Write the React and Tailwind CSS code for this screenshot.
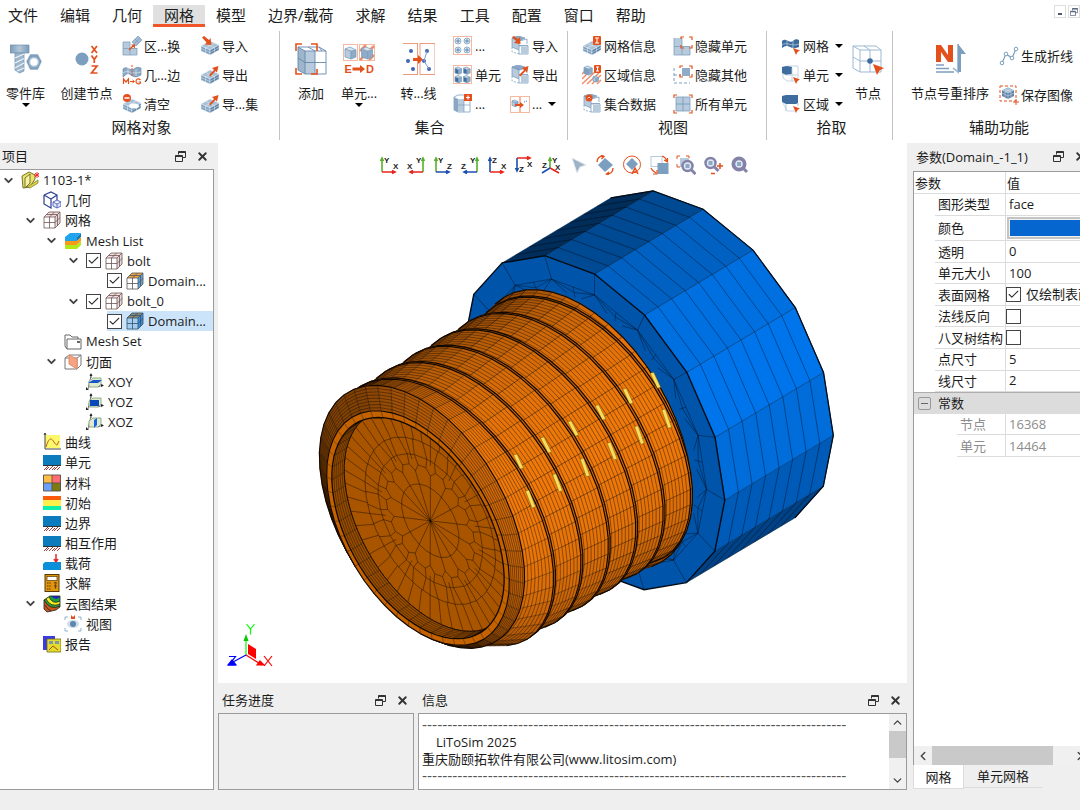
import { useState } from 'react';
import { Check, ChevronDown, ChevronLeft, ChevronRight, ChevronUp, X } from 'lucide-react';
import clsx from 'clsx';

const RED = '#e4501c';
const STEEL = '#7d9fbf';
const PALE = '#b8cbdc';
const DEEP = '#3f6c9f';

/* ---------- bolt model ---------- */

const RAD = Math.PI / 180;
const PITCH = 27.4;

// a point on a ring: cx is the ring centre along the bolt axis, r is relative to the head
const pt = (cx, r, deg) => {
    const c = Math.cos(deg * RAD);
    const s = Math.sin(deg * RAD);
    return [cx + r * (49.7 * c + 120.7 * s), 777.9 - 0.5976 * cx + r * (167 * c + 14.6 * s)];
};
const f = (p) => `${p[0].toFixed(1)} ${p[1].toFixed(1)}`;
const poly = (pts) => `M${pts.map(f).join('L')}Z`;
const mix = (a, b, t) => [a[0] + (b[0] - a[0]) * t, a[1] + (b[1] - a[1]) * t];
const ring = (cx, r, n, start = 0) => poly(Array.from({ length: n }, (_, i) => pt(cx, r, start + (i * 360) / n)));
const shade = (rgb, b) => `rgb(${rgb.map((v) => Math.round(v * b)).join(',')})`;
const light = (deg, low) => low + (1 - low) * Math.max(0, Math.cos((deg - 104) * RAD));

const BLUE = [0, 116, 234];
const ORANGE = [240, 121, 10];

function band(front, back, { n = 48, rows = 1, color, low, gain = 1, edge = true }) {
    const faces = [];
    let grid = '';
    let rim = '';
    for (let i = 0; i < n; i++) {
        const a = -66 + (i * 360) / n;
        const b = -66 + ((i + 1) * 360) / n;
        const A0 = pt(...front(a), a);
        const A1 = pt(...front(b), b);
        const B0 = pt(...back(a), a);
        const B1 = pt(...back(b), b);
        const cross = (A1[0] - A0[0]) * (B0[1] - A0[1]) - (A1[1] - A0[1]) * (B0[0] - A0[0]);
        if (cross <= 0) continue;
        faces.push({ d: poly([A0, A1, B1, B0]), fill: shade(color, gain * light((a + b) / 2, low)) });
        grid += `M${f(A0)}L${f(B0)}`;
        for (let k = 1; k < rows; k++) grid += `M${f(mix(A0, B0, k / rows))}L${f(mix(A1, B1, k / rows))}`;
        rim += `M${f(B0)}L${f(B1)}`;
    }
    return { faces, grid, rim: edge ? rim : '' };
}

const crest = (k, deg) => 446.5 + PITCH * k - (PITCH * (deg - 67)) / 360;
const chamfer = (deg) => 0.784 + 0.06 * Math.cos((deg - 157.6) * RAD);

const headSide = (() => {
    const faces = [];
    let grid = '';
    for (let i = 1; i < 9; i++) {
        const a = i * 22.5;
        const b = a + 22.5;
        faces.push({ d: poly([pt(594.3, 1, a), pt(594.3, 1, b), pt(702.8, 1, b), pt(702.8, 1, a)]), fill: shade(BLUE, light(a + 11, 0.35)) });
        for (let k = 0; k <= 8; k++) grid += `M${f(pt(594.3 + 13.56 * k, 1, a))}L${f(pt(594.3 + 13.56 * k, 1, b))}`;
        grid += `M${f(pt(594.3, 1, a))}L${f(pt(702.8, 1, a))}`;
    }
    return { faces, grid };
})();

const headOutline = `M${[9, 8, 7, 6, 5, 4, 3, 2, 1].map((i) => f(pt(702.8, 1, i * 22.5))).join('L')}`;

const headFaceGrid = (() => {
    let d = ring(594.3, 0.86, 16);
    for (let i = 0; i < 16; i++) {
        const a = i * 22.5;
        d += `M${f(pt(594.3, 1, a))}L${f(pt(594.3, 0.86, a))}L${f(pt(594.3, 0.79, a + 7))}`;
        d += `M${f(pt(594.3, 0.86, a))}L${f(pt(594.3, 0.79, a - 7))}`;
        d += `M${f(pt(594.3, 0.86, a))}L${f(pt(594.3, 0.81, a + 11))}L${f(pt(594.3, 0.86, a + 22.5))}`;
        d += `M${f(mix(pt(594.3, 0.86, a), pt(594.3, 0.86, a + 22.5), 0.5))}L${f(pt(594.3, 0.78, a + 11))}`;
    }
    return d;
})();

const shoulder = band(() => [562, 0.8], () => [583, 0.835], { rows: 6, color: ORANGE, low: 0.62 });

const threads = [5, 4, 3, 2, 1, 0].flatMap((k) => [
    band((a) => [crest(k, a), 0.82], (a) => [crest(k, a) + 2, 0.82], { color: ORANGE, low: 0.62, gain: 0.85 }),
    band(
        (a) => (k ? [crest(k, a) - 24, 0.795] : [423, chamfer(a) - 0.01]),
        (a) => [crest(k, a), 0.82],
        { rows: 8, color: ORANGE, low: 0.62 },
    ),
]);

const nose = [
    band(() => [418, 0.7], (a) => [422, chamfer(a)], { rows: 8, color: ORANGE, low: 0.62, gain: 0.86 }),
    band(() => [418, 0.66], () => [418, 0.7], { rows: 1, color: [196, 98, 0], low: 1 }),
];
const recess = band(() => [430.3, 0.66], () => [418, 0.66], { rows: 6, color: [150, 76, 0], low: 1, edge: false });

const endFaceGrid = (() => {
    const c = 430.3;
    let d = ring(c, 0.22, 24) + ring(c, 0.5, 32);
    for (let i = 0; i < 48; i++) {
        const a = i * 7.5;
        d += `M${f(pt(c, i % 3 ? 0.5 : 0.37, a))}L${f(pt(c, 0.66, a))}`;
    }
    for (let i = 0; i < 16; i++) {
        const a = i * 22.5;
        const at = (r, o) => f(pt(c, r, a + o));
        d += `M${f(pt(c, 0, 0))}L${at(0.3, 0)}`;
        d += `M${at(0.3, 0)}L${at(0.34, 6)}L${at(0.34, 16)}L${at(0.3, 22.5)}`;
        d += `M${at(0.34, 6)}L${at(0.4, 4)}L${at(0.4, 18)}L${at(0.34, 16)}M${at(0.4, 4)}L${at(0.4, -4)}`;
        d += `M${at(0.4, 4)}L${at(0.5, 7)}M${at(0.4, 18)}L${at(0.5, 16)}`;
    }
    return d;
})();

const glints = [
    [650.7, 373.3, 659.3, 388.3], [623.3, 389.3, 631.7, 404], [595.7, 405.7, 604.3, 420],
    [568.3, 421.7, 577.3, 436], [662.3, 410, 670, 428.3], [635, 426.7, 642.7, 444.3],
    [607.7, 443.3, 615.7, 460], [580.7, 459.3, 588.3, 476.7], [541, 438, 550, 453],
    [553, 474.7, 561, 491.7], [514, 455, 522, 469], [526, 491, 534, 508],
];

const Surface = ({ part, w = 1.2 }) => (
    <>
        {part.faces.map((q, i) => <path key={i} d={q.d} fill={q.fill} stroke={q.fill} strokeWidth="0.5" />)}
        <path d={part.grid} stroke="#000" strokeOpacity="0.62" strokeWidth="0.6" fill="none" />
        {part.rim && <path d={part.rim} stroke="#120800" strokeWidth={w} fill="none" />}
    </>
);

function BoltScene() {
    return (
        <svg viewBox="218 186 689 497" className="block h-full w-full" role="img" aria-label="bolt mesh">
            <defs>
                <clipPath id="opening"><path d={ring(418, 0.66, 72)} /></clipPath>
            </defs>
            <Surface part={headSide} />
            <path d={headOutline} stroke="#000c18" strokeWidth="1.3" fill="none" />
            <path d={ring(594.3, 1, 16)} fill="#0055aa" stroke="#000c18" strokeWidth="1.4" />
            <path d={headFaceGrid} stroke="#00101f" strokeOpacity="0.75" strokeWidth="0.6" fill="none" />
            <Surface part={shoulder} />
            {threads.map((t, i) => <Surface key={i} part={t} />)}
            {glints.map(([x0, y0, x1, y1], i) => (
                <path key={i} d={`M${x0 - 0.5} ${y0}l3.5 -1L${x1 + 1.5} ${y1 - 1}l-3.500 1Z`} fill="#f6dd5c" stroke="#6b4a08" strokeWidth="0.4" />
            ))}
            {nose.map((t, i) => <Surface key={i} part={t} />)}
            <g clipPath="url(#opening)">
                <path d={ring(430.3, 0.66, 72)} fill="#a95500" stroke="#1c0e00" strokeWidth="1" />
                <path d={endFaceGrid} stroke="#000" strokeOpacity="0.7" strokeWidth="0.6" fill="none" />
                <Surface part={recess} />
                <path d={ring(430.3, 0.66, 72)} fill="none" stroke="#1c0e00" strokeWidth="1" />
            </g>
            <path d={ring(418, 0.66, 72)} fill="none" stroke="#120800" strokeWidth="1.3" />
            <g strokeWidth="1.2" fill="none">
                <path d="M246 655V640" stroke="#0f0" />
                <path d="M243.500 641L246 634L248.500 641Z" fill="#0c0" />
                <path d="M246 655L262 665" stroke="red" />
                <path d="M257 665L264 665L260 661Z" fill="red" stroke="red" />
                <path d="M248 644L256 649V659L248 654Z" fill="red" />
                <path d="M246 655L233 662" stroke="#00f" />
                <path d="M228 665L236 665L232 660Z" fill="#00f" stroke="#00f" />
                <path d="M246.500 624L250.500 629L254.500 624M250.500 629V634.500" stroke="#0f0" />
                <path d="M264 656L272 666M272 656L264 666" stroke="red" />
                <path d="M229 656.500H235.500L229 665H235.500" stroke="#00f" />
            </g>
        </svg>
    );
}

/* ---------- ribbon icons ---------- */

const Svg = ({ size = 20, box = size, children }) => (
    <svg width={size} height={size} viewBox={`0 0 ${box} ${box}`} fill="none" className="shrink-0" aria-hidden="true">{children}</svg>
);

const Slab = () => (
    <g stroke="#e6eef5" strokeWidth="0.5">
        <path d="M1 10L10 5L19 9L10 14Z" fill="#a9c1d6" />
        <path d="M1 10L10 14V19L1 15Z" fill={STEEL} />
        <path d="M19 9L10 14V19L19 14Z" fill="#5e82a6" />
        <path d="M5.500 7.500L14.500 11.500V16.500M5.500 12V17M14.500 7L5.500 12M1 12.500L10 16.500L19 11.500" />
    </g>
);
const ArrowIn = () => <path d="M2 1.500L4 0L9 4L10.500 2L11.500 9L5 8.500L6.500 6.500Z" fill={RED} />;
const ArrowOut = () => <path d="M9 10L14 5L12 3L18.500 1L17 7.500L15.500 6L10.500 11.500Z" fill={RED} />;

const MiniCube = ({ x = 0, y = 0, s = 1, fill = PALE }) => (
    <g transform={`translate(${x} ${y}) scale(${s})`} stroke={STEEL} strokeWidth={0.8 / s} strokeLinejoin="round">
        <path d="M0 2L6 4V12L0 10Z" fill={fill} />
        <path d="M6 4L11 3V10L6 12Z" fill="#8fabc5" />
        <path d="M0 2L5 0L11 3L6 4Z" fill="#d9e4ed" />
    </g>
);

const HalfCube = () => (
    <g strokeWidth="0.8" stroke={STEEL}>
        <path d="M2 2L9 5V14L2 11Z" fill={PALE} />
        <path d="M2 2L8 0L15 2L9 5Z" fill={DEEP} fillOpacity="0.6" />
        <path d="M9 5L17 3V8M9 9.500H18M9 14V18H18V10H9" fill="none" />
        <path d="M11 11H18V18H11Z" fill={PALE} stroke="none" />
        <path d="M2 11V16L9 18" strokeDasharray="2 1.500" />
    </g>
);

const Cursor = ({ x = 12, y = 12 }) => <path d={`M${x} ${y}L${x + 7} ${y + 2.5}L${x + 4.5} ${y + 4}L${x + 3} ${y + 7}Z`} fill={RED} />;

const small = {
    swap: <><path d="M1 6H8V12H15V19H1Z" fill={PALE} /><path d="M1 12.500H15M8 6V19M1 6H8M1 6V19H15V12" stroke={STEEL} strokeWidth="0.8" /><path d="M10 6L16 0L20 4L14 10Z" fill="#a4bbcf" stroke={STEEL} strokeWidth="0.7" /><path d="M12 8L18 2M13 3L17 7" stroke={STEEL} strokeWidth="0.6" /><path d="M7 14L12 9" stroke={RED} strokeWidth="1.400" /><path d="M9 8.500H13V12.500Z" fill={RED} /></>,
    edge: <><path d="M1 4C5 0 8 7 12 4S17 3 19 3V10C15 12 13 13 9 10S4 10 1 12Z" fill="#8ba9c5" stroke="#5e82a6" strokeWidth="0.6" /><path d="M6 3V10M14 4V11M1 8C6 4 9 10 19 7" stroke="#dce7f0" strokeWidth="0.7" /><path d="M10 0V12" stroke={RED} strokeDasharray="2 1" /><path d="M1.500 19V14L4 17L6.500 14V19M18.500 15C16 12.500 14 14.500 14 16.500S17 20 18.500 18V17H16.500" stroke={RED} strokeWidth="1.200" /><path d="M8 16.500H12M10.500 15L12.500 16.500L10.500 18" stroke={RED} /></>,
    clear: <><Slab /><ellipse cx="12" cy="12" rx="5" ry="2.500" fill="#fff" /><circle cx="5" cy="4" r="4" fill={RED} /><path d="M2.500 4H7.500" stroke="#fff" strokeWidth="1.500" /></>,
    in: <><Slab /><ArrowIn /></>,
    out: <><Slab /><ArrowOut /></>,
    dots: <><rect x="0.500" y="0.500" width="18" height="18" stroke="#f5b9a2" />{[5, 14].flatMap((x) => [5, 14].map((y) => <g key={`${x}${y}`} stroke={STEEL} strokeWidth="0.8"><circle cx={x} cy={y} r="3" fill="#dbe6ef" /><circle cx={x} cy={y} r="1.300" fill={STEEL} /></g>))}</>,
    cells: <><rect x="0.500" y="0.500" width="18" height="18" stroke="#f5b9a2" />{[2, 10.5].flatMap((x) => [2, 10.5].map((y) => <MiniCube key={`${x}${y}`} x={x} y={y} s={0.6} fill={DEEP} />))}</>,
    addset: <><path d="M1 3L5 1H12V4H17V18H5L1 16Z" fill="#fff" stroke={STEEL} strokeWidth="0.8" /><path d="M1 3L5 5V18L1 16Z" fill="#89a7c2" /><path d="M5 5H11V18H5Z" fill={PALE} /><path d="M5 11H17M11 5V18" stroke={STEEL} strokeWidth="0.7" /><rect x="11" y="0" width="8" height="7" fill={RED} /><path d="M15 1.500V5.500M13 3.500H17" stroke="#fff" strokeWidth="1.200" /></>,
    setin: <><HalfCube /><path d="M2 1L4 0L8 3L10 1L10.500 8L4 7L6 5Z" fill={RED} /></>,
    setout: <><HalfCube /><ArrowOut /></>,
    split: <><rect x="0.500" y="2.500" width="9" height="16" stroke="#f5b9a2" /><rect x="10.500" y="2.500" width="9" height="16" stroke="#f5b9a2" /><MiniCube x={2} y={6} s={0.55} /><path d="M5 10H10V8L14 11L10 14V12H5Z" fill={RED} /><path d="M14 8L17 7" stroke={DEEP} strokeDasharray="1 1" /></>,
    meshinfo: <><Slab /><rect x="11" y="0" width="8" height="9" rx="1" fill={RED} /><path d="M13 2H17M15 2V7M13 7H17" stroke="#fff" /></>,
    zoneinfo: <><path d="M0 9L4 5M0 14L9 5M0 19L14 6M5 19L17 8M10 19L19 10M15 19L19 15" stroke="#ef8d6c" strokeWidth="1.500" /><MiniCube x={2} y={1} s={0.75} fill="#7f9fbe" /><MiniCube x={11} y={11} s={0.5} /><rect x="12" y="0" width="7" height="8" rx="1" fill={RED} /><path d="M14 2H17M15.500 2V6M14 6H17" stroke="#fff" /></>,
    setdata: <><HalfCube /><circle cx="7" cy="4" r="3.500" fill={RED} /><path d="M5.500 4.500L7 3L8.500 4.500" stroke="#fff" strokeWidth="0.700" /></>,
    hide: <><path d="M1 2H9V10H17V19H1Z" fill={PALE} /><path d="M1 10.500H17M9 2V19M1 2V19H17V10" stroke={STEEL} strokeWidth="0.8" /><path d="M8 3V1H11M16 1H19V4M19 9V12H16M11 12H8V9" stroke={RED} strokeWidth="1.200" /></>,
    hideother: <><path d="M1 3V18H17" stroke={STEEL} strokeDasharray="3 2" /><rect x="9" y="3" width="8" height="8" fill="#8fabc5" /><path d="M1 10H8" stroke={STEEL} strokeDasharray="3 2" /><path d="M7 3V1H10M16 1H19V4M19 9V12H16M10 12H7V9" stroke={RED} strokeWidth="1.200" /></>,
    all: <><rect x="3" y="3" width="14" height="14" fill={PALE} stroke={STEEL} strokeWidth="0.8" /><path d="M10 3V17M3 10H17" stroke={STEEL} /><path d="M1 4V1H4M16 1H19V4M19 16V19H16M4 19H1V16" stroke={RED} strokeWidth="1.200" /></>,
    pickmesh: <><path d="M1 5C5 1 8 8 12 5S16 4 18 4V11C15 12 13 13 9 11S4 10 1 12Z" fill={DEEP} /><path d="M6 4V10M12 5V12M1 9C6 5 9 11 18 8" stroke="#b9cfe2" strokeWidth="0.7" /><Cursor /></>,
    pickcell: <><path d="M2 2L7 1H17V14L14 16H6L2 13Z" stroke={PALE} strokeWidth="0.8" /><path d="M1 2L6 1L11 2V9L5 10L1 8Z" fill={DEEP} /><path d="M11 3V16M5 10H17" stroke={PALE} strokeWidth="0.8" /><Cursor /></>,
    pickzone: <><path d="M2 9L6 17H15" stroke={PALE} strokeWidth="0.8" /><path d="M1 2L5 1H17V9L15 10H5L1 8Z" fill={DEEP} /><path d="M5 10V17M17 9V12" stroke={PALE} /><Cursor /></>,
    polyline: <><path d="M3 17L7 8L13 12L17 3" stroke={STEEL} strokeWidth="1.200" />{[[3, 17], [7, 8], [13, 12], [17, 3]].map(([x, y]) => <circle key={x} cx={x} cy={y} r="1.800" fill="#fff" stroke={STEEL} />)}</>,
    snapshot: <><rect x="1" y="1" width="16" height="15" stroke={RED} strokeDasharray="3 2" /><path d="M9 2.500L15 5.500V11L9 14L3 11V5.500Z" fill="#5e82a6" /><path d="M9 2.500L15 5.500L9 8.500L3 5.500Z" fill="#a9c1d6" /><path d="M9 8.500V14M6 4L12 7V12.500M12 4L6 7V12.500M3 8L9 11L15 8" stroke="#dce7f0" strokeWidth="0.5" /><path d="M17 14V20M14 17H20" stroke={RED} /></>,
};

const big = {
    parts: <><path d="M0 2H19V10H0Z" fill="url(#steel)" stroke="#6f91b0" strokeWidth="0.7" /><path d="M5 10H14V28L9.500 30L5 27Z" fill="#9db6cc" stroke="#6f91b0" strokeWidth="0.7" /><path d="M5 15L14 11M5 20L14 15.500M5 25L14 20M7 28L14 25" stroke="#f1f5f9" strokeWidth="1.100" /><path d="M20 11H28L32 18.500L28 27H20L16 18.500Z" fill="#7f9fbd" stroke="#f4f7fa" strokeWidth="0.7" /><circle cx="24" cy="19" r="4.500" fill="#fff" stroke="#aac0d4" strokeWidth="1.500" /></>,
    nodes: <><circle cx="11" cy="16" r="6.500" fill={STEEL} /><path d="M20.500 3L26 10M26 3L20.500 10M20.500 12.500L23.300 16.500L26 12.500M23.300 16.500V20M20.500 23H26L20.500 30H26.500" stroke={RED} strokeWidth="1.700" /></>,
    add: <><path d="M3 4L10 8V31L3 27Z" fill="#9db6cc" /><path d="M10 8H20V31H10Z" fill={PALE} /><path d="M3 4H24L31 8V31H10L3 27ZM3 4L10 8H31M10 8V31M20 8V31M13 4L20 8M3 15L10 19.500H31M24 4L27 8" stroke="#6488ab" strokeWidth="0.9" /><path d="M1 8V1H7M16 1H22V8M22 26V31H16M7 31H1V25" stroke={RED} strokeWidth="1.600" /></>,
    convert: <><rect x="0.500" y="1.500" width="14" height="16" stroke="#f5b9a2" /><rect x="16.500" y="1.500" width="15" height="16" stroke="#f5b9a2" /><path d="M17 8L23 2M17 17L31 3M26 17L31 12" stroke="#ef8d6c" strokeWidth="2.500" /><MiniCube x={2} y={4} /><MiniCube x={18.5} y={4} fill="#8fabc5" /><path d="M9.500 24.500H17V22L22 26L17 30V27.500H9.500Z" fill={RED} /><g fontFamily="Liberation Sans" fontWeight="700" fontSize="11" fill={RED}><text x="1.500" y="29.500">E</text><text x="23" y="29.500">D</text></g></>,
    topoly: <><rect x="-0.500" y="0.500" width="15" height="31" stroke="#f29b7c" /><rect x="17" y="0.500" width="15" height="31" stroke="#f29b7c" /><g fill="#3d67b5"><circle cx="8" cy="8" r="2" /><circle cx="5" cy="18" r="2" /><circle cx="10" cy="26" r="2" /><circle cx="24" cy="8" r="2" /><circle cx="21" cy="18" r="2" /><circle cx="26" cy="26" r="2" /></g><path d="M24 8L21 18L26 26" stroke="#7e9cd0" /><path d="M10 15H15V12L20 16.500L15 21V18H10Z" fill={RED} /></>,
    picknode: <><path d="M1 3L8 7V29L1 25ZM8 7H29V29H8M1 3H24L29 7M8 18H29M18 7V29M1 14L8 18M12 3L18 7" stroke="#9db9d3" strokeWidth="1" /><circle cx="18" cy="18" r="2.800" fill={DEEP} /><path d="M21 21L32 25L27.500 27.500L25 32Z" fill={RED} /></>,
    reorder: <><path d="M2 19V2H7L14 12V2H19V19H14L7 9V19Z" fill={RED} /><path d="M2 22H10M2 25.500H15M2 29H20" stroke={STEEL} strokeWidth="1.500" /><path d="M24 1V29L19 25" stroke="#a9bfd2" strokeWidth="2" /><path d="M24 1L32 11H27V29H24Z" fill={STEEL} /></>,
};

const Caret = ({ className }) => <span className={clsx('block h-0 w-0 border-x-[4px] border-t-[4px] border-x-transparent border-t-black', className)} />;

const Tool = ({ icon, label, menu }) => (
    <button className="flex h-[29px] items-center gap-[2px] whitespace-nowrap">
        <Svg>{small[icon]}</Svg>
        {label}
        {menu && <Caret className="ml-1" />}
    </button>
);

const BigTool = ({ icon, label, menu, className }) => (
    <button className={clsx('flex shrink-0 flex-col items-center whitespace-nowrap pt-3', className)}>
        <Svg size={32}>{big[icon]}</Svg>
        <span className="mt-2 leading-5">{label}</span>
        {menu && <Caret />}
    </button>
);

const Group = ({ title, className, children }) => (
    <section className={clsx('flex shrink-0 flex-col border-r border-[#c4c4c4]', className)}>
        <div className="flex h-[86px] items-start">{children}</div>
        <h2 className="pl-1 text-center text-[15px] leading-5">{title}</h2>
    </section>
);

const MENU = ['文件', '编辑', '几何', '网格', '模型', '边界/载荷', '求解', '结果', '工具', '配置', '窗口', '帮助'];

function Ribbon() {
    return (
        <header className="shrink-0 overflow-hidden bg-white">
            <div className="flex h-7 items-start justify-between pt-[5px]">
                <nav className="-ml-[3px] flex">
                    {MENU.map((m) => (
                        <button key={m} className={clsx('h-[22px] whitespace-nowrap border-b-[3px] px-[11px] text-[15px] leading-5', m === '网格' ? 'border-[#f0562a] bg-[#e0e0e0]' : 'border-transparent')}>{m}</button>
                    ))}
                </nav>
                <div className="flex gap-[2px] text-[#4a5a70]">
                    <button aria-label="最小化" className="h-[13px] w-[12px] border border-[#dedede] pl-[3px] pt-1"><span className="block h-[2px] w-1 bg-[#4a5a70]" /></button>
                    <button aria-label="还原" className="h-[13px] w-[12px] border border-[#dedede] pl-px"><Restore size={8} /></button>
                </div>
            </div>
            <div className="flex h-[115px] pb-[3px] pt-[3px]">
                <Group title="网格对象" className="w-[280px]">
                    <BigTool icon="parts" label="零件库" menu className="w-[51px]" />
                    <BigTool icon="nodes" label="创建节点" className="w-[71px]" />
                    <div className="w-[78px]">
                        <Tool icon="swap" label="区...换" />
                        <Tool icon="edge" label="几...边" />
                        <Tool icon="clear" label="清空" />
                    </div>
                    <div>
                        <Tool icon="in" label="导入" />
                        <Tool icon="out" label="导出" />
                        <Tool icon="out" label="导...集" />
                    </div>
                </Group>
                <Group title="集合" className="w-[288px] pl-2">
                    <BigTool icon="add" label="添加" className="w-[46px]" />
                    <BigTool icon="convert" label="单元..." menu className="w-[50px]" />
                    <BigTool icon="topoly" label="转...线" className="w-[69px]" />
                    <div className="w-[57px]">
                        <Tool icon="dots" label="..." />
                        <Tool icon="cells" label="单元" />
                        <Tool icon="addset" label="..." />
                    </div>
                    <div>
                        <Tool icon="setin" label="导入" />
                        <Tool icon="setout" label="导出" />
                        <Tool icon="split" label="..." menu />
                    </div>
                </Group>
                <Group title="视图" className="w-[199px] pl-2">
                    <div className="ml-[6px] w-[91px]">
                        <Tool icon="meshinfo" label="网格信息" />
                        <Tool icon="zoneinfo" label="区域信息" />
                        <Tool icon="setdata" label="集合数据" />
                    </div>
                    <div>
                        <Tool icon="hide" label="隐藏单元" />
                        <Tool icon="hideother" label="隐藏其他" />
                        <Tool icon="all" label="所有单元" />
                    </div>
                </Group>
                <Group title="拾取" className="w-[126px]">
                    <div className="ml-[14px] w-[66px]">
                        <Tool icon="pickmesh" label="网格" menu />
                        <Tool icon="pickcell" label="单元" menu />
                        <Tool icon="pickzone" label="区域" menu />
                    </div>
                    <BigTool icon="picknode" label="节点" className="w-[42px]" />
                </Group>
                <Group title="辅助功能" className="w-[209px]">
                    <BigTool icon="reorder" label="节点号重排序" className="ml-4 w-[82px]" />
                    <div className="ml-2 flex flex-col gap-[10px] pt-[10px]">
                        <Tool icon="polyline" label="生成折线" />
                        <Tool icon="snapshot" label="保存图像" />
                    </div>
                </Group>
            </div>
        </header>
    );
}

/* ---------- docks ---------- */

function Restore({ size = 11 }) {
    return (
        <svg width={size} height={size} viewBox="0 0 11 11" fill="none" stroke="currentColor" aria-hidden="true">
            <path d="M3.500 3.500V0.500H10.500V6.500H7.500M0.500 4.500H7.500V10.500H0.500Z" />
            <path d="M3.500 1.200H10.500M0.500 5.200H7.500" strokeWidth="1.500" />
        </svg>
    );
}

const DockHeader = ({ title, className }) => (
    <div className={clsx('flex shrink-0 items-center whitespace-nowrap', className)}>
        <h2 className="mr-auto">{title}</h2>
        <button aria-label="浮动" className="mr-[10px] shrink-0 text-[#333]"><Restore /></button>
        <button aria-label="关闭" className="shrink-0 text-[#333]"><X size={13} strokeWidth={3.5} /></button>
    </div>
);

function Tick({ id, label, checked }) {
    const [on, setOn] = useState(checked);
    return (
        <span className="relative block h-[15px] w-[15px] shrink-0">
            <input id={id} type="checkbox" aria-label={label} checked={on} onChange={() => setOn(!on)} className="block h-[15px] w-[15px] appearance-none border border-[#444] bg-white" />
            {on && <Check size={13} strokeWidth={2} className="pointer-events-none absolute left-px top-px text-[#333]" />}
        </span>
    );
}

const gridCube = (side, top, face = '#fff', line = '#6d5555') => (
    <>
        <path d="M1 6H12V17H1Z" fill={face} /><path d="M1 6L6 1H17L12 6Z" fill={top} /><path d="M12 6L17 1V12L12 17Z" fill={side} />
        <path d="M1 6H12V17H1ZM1 6L6 1H17L12 6M17 1V12L12 17M6.500 6V17M1 11.500H12L17 6.500M6.500 6L11.500 1M3.500 3.500H14.500V14.500" stroke={line} strokeWidth="0.8" />
    </>
);
const support = <><path d="M0 2H18V12H0Z" fill="#0a7bbd" /><path d="M0 12.500H18" stroke="#333" /><path d="M1 17L5 13M6 17L10 13M11 17L15 13M3 17L6 14M9 17L12 14M14 17L17 14" stroke="#a03b3b" /></>;
const axes = (mid) => <><path d="M5 3L2 16M5 1V5M12 14L17 12" stroke="#555" strokeWidth="0.8" /><path d="M3 8L7 5H15V11L12 14H3Z" fill="#dfead0" stroke="#7c9a6c" strokeWidth="0.8" />{mid}<path d="M15 11L18 12.500L15 14ZM0 14V17H3M3.500 3L5 0L6.500 3Z" fill="#222" /></>;

const tree = {
    project: <><path d="M1 5L8 1L14 4V8L9 16L2 17Z" fill="#e9e36a" stroke="#77722a" /><path d="M4 7L9 3V12L4 17Z" fill="#f7f3a6" stroke="#77722a" /><path d="M6 16L17 9V12L9 17Z" fill="#d9d04a" stroke="#77722a" strokeWidth="0.7" /><path d="M16 1V7M13 4H19M14 2L18 6M18 2L14 6" stroke="#e22" strokeWidth="0.9" /></>,
    geometry: <><path d="M1 4L8 1L14 4V9M1 4V13L8 17V8L1 4M8 8L14 4" stroke="#2d3f8f" strokeWidth="1.200" /><path d="M10 11L14 9L18 11V15L14 17L10 15ZM10 11L14 13L18 11M14 13V17" stroke="#4e62b8" fill="#dfe4f8" strokeWidth="0.9" /></>,
    mesh: gridCube('#e7d9d9', '#f2dcdc'),
    orange: gridCube('#5ba6e0', '#e8a24a', '#fff', '#555'),
    blue: gridCube('#3f8fd6', '#8a8a70', '#a5cdf0', '#33506a'),
    list: <><path d="M1 5L6 1H17L13 5ZM1 5H13V9H1Z" fill="#22a3ee" /><path d="M13 5L17 1V5L13 9Z" fill="#0a78bd" /><path d="M1 9H13V13H1ZM13 9L17 5V9L13 13Z" fill="#f79a1a" /><path d="M1 13H13V17H1ZM13 13L17 9V13L13 17Z" fill="#b3e81c" /></>,
    folder: <><path d="M1 14V3H6L8 5H14V7" stroke="#666" /><path d="M3 17V7H17V17Z" stroke="#666" fill="#fff" /><path d="M13 10H16" stroke="#333" strokeWidth="1.500" /><path d="M1 14L3 17" stroke="#666" /></>,
    cut: <><path d="M1 5L5 2H17V12L13 16H1ZM1 5H13V16M13 5L17 2" stroke="#777" /><path d="M5 2L13 6V16L5 11Z" fill="#f6a384" stroke="#e88a66" /></>,
    xoy: axes(<path d="M2 10L7 7H16L12 10Z" fill="#1256c9" />),
    yoz: axes(<path d="M4 7H13V13H4Z" fill="#0a48b8" />),
    xoz: axes(<path d="M8 7L11 5V12L8 15Z" fill="#1b62e0" />),
    curve: <><path d="M2 2H17V15H2Z" fill="#fdf76a" /><path d="M2 0V16H18M1 2L2 0L3 2" stroke="#444" /><path d="M3 14C5 8 6 6 8 6S12 12 14 12L16 8" stroke="#c0602a" /></>,
    support,
    material: <><path d="M0 1H9V9H0Z" fill="#ffbc4b" /><path d="M9 1H18V9H9Z" fill="#ff6c74" /><path d="M0 9H9V17H0Z" fill="#6fa0f7" /><path d="M9 9H18V17H9Z" fill="#7d7a12" /><path d="M0.500 1H17.500V17H0.500ZM9 1V17M0 9H18" stroke="#554" strokeWidth="0.9" /></>,
    initial: <><path d="M0 2H18V6H0Z" fill="#fb5a0a" /><path d="M0 6H18V12H0Z" fill="#fdf04a" /><path d="M0 12H18V16H0Z" fill="#0df0a8" /></>,
    load: <><path d="M0 10L2 8H18V16H0Z" fill="#0a90d8" /><path d="M13 0V7M11 5L13 8L15 5" stroke="#e02b2b" strokeWidth="1.500" /></>,
    calc: <><rect x="2" y="0.500" width="14" height="17" fill="#e0950f" stroke="#5a3a05" /><rect x="4" y="2.500" width="10" height="4" fill="#fff" stroke="#5a3a05" strokeWidth="0.700" /><path d="M4 9H8M4 12H8M4 15H8M11 9H14M11 12H14M12.500 8V15" stroke="#5a3a05" strokeWidth="1.200" strokeDasharray="1.500 0.700" /></>,
    contour: <><path d="M1 5L7 1H17V12L13 15L4 17L1 14Z" fill="#c9541c" /><path d="M1 5Q7 16 17 11V1H7Z" fill="#2f9a3a" /><path d="M3 4Q8 13 17 9V1H7Z" fill="#f4ee1b" /><path d="M6 2Q10 10 17 6V1H7Z" fill="#1d9a3c" /><path d="M8 1H17Q14 7 8 1Z" fill="#2020d0" /><path d="M1 5Q7 16 17 11M3 4Q8 13 17 9M6 2Q10 10 17 6M1 5L7 1H17V12L13 15L4 17L1 14ZM2 10Q4 14 8 16" stroke="#222" strokeWidth="0.8" /></>,
    view: <><path d="M1 5V2H4M14 2H17V5M17 13V16H14M4 16H1V13" stroke="#8fb3cf" /><ellipse cx="9" cy="9" rx="6" ry="4" fill="#cfdde8" /><circle cx="9" cy="9" r="3" fill="#5e87ad" /><path d="M7 4V0L9 2L11 0V4Z" fill={RED} /></>,
    report: <><path d="M0 1H12V15H0Z" fill="#3a3ae0" /><path d="M4 4H18V17H4Z" fill="#e3dc2a" stroke="#6f6a14" strokeWidth="0.8" /><path d="M6 6H10V9H6ZM12 6H16V9H12Z" fill="#7f96a8" /><path d="M6 15L10 11L15 15" stroke="#b04a18" /></>,
};

const ROWS = [
    { l: 0, icon: 'project', text: '1103-1*', open: true },
    { l: 1, icon: 'geometry', text: '几何' },
    { l: 1, icon: 'mesh', text: '网格', open: true },
    { l: 2, icon: 'list', text: 'Mesh List', open: true },
    { l: 3, icon: 'mesh', text: 'bolt', open: true, tick: true },
    { l: 4, icon: 'orange', text: 'Domain...', tick: true },
    { l: 3, icon: 'mesh', text: 'bolt_0', open: true, tick: true },
    { l: 4, icon: 'blue', text: 'Domain...', tick: true, selected: true },
    { l: 2, icon: 'folder', text: 'Mesh Set' },
    { l: 2, icon: 'cut', text: '切面', open: true },
    { l: 3, icon: 'xoy', text: 'XOY' },
    { l: 3, icon: 'yoz', text: 'YOZ' },
    { l: 3, icon: 'xoz', text: 'XOZ' },
    { l: 1, icon: 'curve', text: '曲线' },
    { l: 1, icon: 'support', text: '单元' },
    { l: 1, icon: 'material', text: '材料' },
    { l: 1, icon: 'initial', text: '初始' },
    { l: 1, icon: 'support', text: '边界' },
    { l: 1, icon: 'support', text: '相互作用' },
    { l: 1, icon: 'load', text: '载荷' },
    { l: 1, icon: 'calc', text: '求解' },
    { l: 1, icon: 'contour', text: '云图结果', open: true },
    { l: 2, icon: 'view', text: '视图' },
    { l: 1, icon: 'report', text: '报告' },
];
const INDENT = ['pl-0', 'pl-[22px]', 'pl-[43px]', 'pl-[65px]', 'pl-[86px]'];

function ProjectDock() {
    return (
        <aside className="flex w-[214px] shrink-0 flex-col">
            <DockHeader title="项目" className="h-[26px] pl-[2px] pr-[5px]" />
            <div className="flex-1 border-b border-r border-t border-[#9a9a9f] bg-white">
                <ul className="flex h-[484px] flex-col justify-between">
                    {ROWS.map((r, i) => (
                        <li key={i} className={clsx('flex h-5 items-center', INDENT[r.l])}>
                            <span className="flex w-[21px] shrink-0 pl-[2px]">
                                {r.open && <button aria-label={`折叠 ${r.text}`}><ChevronDown size={13} strokeWidth={3.5} className="text-[#444]" /></button>}
                            </span>
                            <span className={clsx('flex h-5 flex-1 items-center gap-1 whitespace-nowrap', r.selected && 'bg-[#cce4f9]')}>
                                {r.tick && <Tick label={r.text} checked />}
                                <Svg size={18}>{tree[r.icon]}</Svg>
                                {r.text}
                            </span>
                        </li>
                    ))}
                </ul>
            </div>
        </aside>
    );
}

const G = '#58b02c';
const R = '#e8261c';
const B = '#1c4fb0';
const Axis = ({ name, lines, texts }) => (
    <button aria-label={name}>
        <Svg>
            {lines.map(([d, c]) => <path key={d} d={d} stroke={c} strokeWidth="1.600" />)}
            {texts.map(([t, x, y]) => <text key={t} x={x} y={y} fontSize="8" fontWeight="700" fontFamily="Liberation Sans" fill="#222">{t}</text>)}
        </Svg>
    </button>
);

const up = 'M3 17V4M1.500 6L3 3L4.500 6';
const upR = 'M17 17V4M15.500 6L17 3L18.500 6';
const right = 'M3 17H15M13 15.500L16 17L13 18.500';
const left = 'M17 17H5M7 15.500L4 17L7 18.500';
const AXES = [
    ['+Z', [[up, G], [right, R]], [['Y', 5, 8], ['X', 14, 14]]],
    ['-Z', [[upR, G], [left, R]], [['Y', 10, 8], ['X', 1, 14]]],
    ['+X', [[up, G], [right, B]], [['Y', 5, 8], ['Z', 14, 14]]],
    ['-X', [[upR, G], [left, B]], [['Y', 10, 8], ['Z', 1, 14]]],
    ['+Y', [[up, B], [right, R]], [['Z', 5, 8], ['X', 14, 14]]],
    ['-Y', [['M3 3V15M1.500 13L3 16L4.500 13', B], ['M3 3H15M13 1.500L16 3L13 4.500', R]], [['Z', 5, 17], ['X', 13, 12]]],
    ['ISO', [['M9 13V4M7.500 6L9 3L10.500 6', G], ['M9 13L1 18', B], ['M9 13L18 18', R]], [['Y', 11, 8], ['Z', 1, 13], ['X', 14, 15]]],
];
const lens = (x, y) => <><circle cx={x} cy={y} r="5" fill="#dfe9f2" stroke="#8482a8" strokeWidth="2.500" /><path d={`M${x + 4} ${y + 4}L${x + 8} ${y + 8}`} stroke="#8482a8" strokeWidth="3" /><rect x={x - 2} y={y - 2} width="4" height="4" fill="#8ba9c5" /></>;
const VIEW_TOOLS = [
    ['选择', <path key="a" d="M4 3L18 10L12 12L9 18Z" fill="#9fb3c6" stroke="#dfe6ec" />],
    ['旋转', <g key="b"><path d="M3 10L10 3L18 10L10 17Z" fill="#7d9fbf" /><path d="M2 7C2 3 5 1 8 1M6 0L9 1.500L6.500 4M18 13C18 17 15 19 12 19M14 17L11.500 19L14 20" stroke={RED} strokeWidth="1.400" /></g>],
    ['自动旋转', <g key="c"><circle cx="10" cy="9.500" r="8.500" stroke={RED} /><path d="M4 9L10 3L16 9L10 15Z" fill="#7d9fbf" /><path d="M10 19L13 13L16 19M11 17H15" stroke={RED} strokeWidth="1.500" /></g>],
    ['平移', <g key="d"><rect x="2" y="1.500" width="11" height="10" stroke={PALE} fill="#fff" /><rect x="8.500" y="8" width="11" height="11" fill="#7d9fbf" /><path d="M13 1C16 2 17 3 18 6M18.500 3V7L15 5M2 13C3 16 5 17 7 18M8 15V19H4" stroke={RED} strokeWidth="1.200" /></g>],
    ['框选缩放', <g key="e"><rect x="4" y="3" width="9" height="9" fill={PALE} /><path d="M1 4V1H4M10 1H13V3M1 9V12H4" stroke={RED} />{lens(11.5, 11)}</g>],
    ['缩放', <g key="f">{lens(7.5, 8)}<path d="M14 11H20M17 8V14M8 18.500H12" stroke={RED} strokeWidth="1.500" /></g>],
    ['适合窗口', <g key="g">{lens(9, 9)}<circle cx="9" cy="9" r="6.500" stroke="#8482a8" strokeWidth="2" /></g>],
];

const Viewport = () => (
    <main className="flex min-h-0 flex-1 flex-col bg-white">
        <div className="flex h-[43px] shrink-0 items-center justify-center gap-[7px] pl-1">
            {AXES.map(([name, lines, texts]) => <Axis key={name} name={name} lines={lines} texts={texts} />)}
            {VIEW_TOOLS.map(([name, icon]) => <button key={name} aria-label={name}><Svg>{icon}</Svg></button>)}
        </div>
        <div className="min-h-0 flex-1"><BoltScene /></div>
    </main>
);

const RULE = '-'.repeat(84);

const Messages = () => (
    <div className="flex w-full gap-1">
        <section className="flex w-[196px] shrink-0 flex-col">
            <DockHeader title="任务进度" className="h-[30px] pl-1 pr-[5px] pt-1" />
            <div className="h-[77px] border border-[#9a9a9f]" />
        </section>
        <section className="flex min-w-0 flex-1 flex-col">
            <DockHeader title="信息" className="h-[30px] pl-1 pr-[5px] pt-1" />
            <div className="flex h-[77px] border border-[#9a9a9f] bg-white">
                <div className="min-w-0 flex-1 overflow-hidden whitespace-nowrap pl-[3px] pt-[3px]">
                    <p className="font-['DejaVu_Sans'] text-sm leading-[17px] text-[#555]">{RULE}</p>
                    <p className="pl-[14px] leading-[17px]">LiToSim 2025</p>
                    <p className="leading-[17px]">重庆励颐拓软件有限公司(www.litosim.com)</p>
                    <p className="font-['DejaVu_Sans'] text-sm leading-[17px] text-[#555]">{RULE}</p>
                </div>
                <div className="flex w-[17px] flex-col items-center bg-[#f0f0f0] text-[#444]">
                    <ChevronUp size={13} strokeWidth={2.5} className="my-[2px]" />
                    <div className="h-[27px] w-full bg-[#c9c9c9]" />
                    <ChevronDown size={13} strokeWidth={2.5} className="mb-[2px] mt-auto" />
                </div>
            </div>
        </section>
    </div>
);

const PARAMS = [
    ['图形类型', 'face'],
    ['颜色', <span key="c" className="-ml-[2px] block h-[22px] border-2 border-[#c4c4c4] bg-[#f0f0f0] p-px"><span className="block h-full bg-[#0666cf]" /></span>],
    ['透明', '0'],
    ['单元大小', '100'],
    ['表面网格', <label key="s" className="-ml-[3px] flex items-center gap-[5px]"><Tick checked />仅绘制表面</label>],
    ['法线反向', <span key="n" className="-ml-[3px] block"><Tick label="法线反向" checked={false} /></span>],
    ['八叉树结构', <span key="o" className="-ml-[3px] block"><Tick label="八叉树结构" checked={false} /></span>],
    ['点尺寸', '5'],
    ['线尺寸', '2'],
];

function ParamDock() {
    const cell = 'border-b border-[#dcdcdc] p-0 text-left font-normal';
    return (
        <aside className="flex min-w-0 flex-1 flex-col overflow-hidden">
            <DockHeader title="参数(Domain_-1_1)" className="h-[28px] w-[174px] pb-px pl-[3px]" />
            <div className="flex-1 overflow-hidden border-l border-t border-[#9a9a9f] bg-white">
                <table className="h-[285px] w-[240px] table-fixed border-separate border-spacing-0 whitespace-nowrap">
                    <colgroup>
                        <col className="w-[21px]" />
                        <col className="w-[22px]" />
                        <col className="w-[49px]" />
                        <col />
                    </colgroup>
                    <thead>
                        <tr className="h-[22px]">
                            <th colSpan={3} className={clsx(cell, 'border-r pl-px')}>参数</th>
                            <th className={cell}><span className="pl-px">值</span></th>
                        </tr>
                    </thead>
                    <tbody>
                        {PARAMS.map(([name, value]) => (
                            <tr key={name} className={name === '颜色' ? 'h-[25px]' : 'h-[21px]'}>
                                <td className="p-0" />
                                <th colSpan={2} className={clsx(cell, 'border-r')}><span className="pl-[3px]">{name}</span></th>
                                <td className={clsx(cell, 'leading-none')}><div className="pl-[3px]">{value}</div></td>
                            </tr>
                        ))}
                        <tr className="h-[21px] bg-[#dcdcdc]">
                            <th colSpan={4} className="border-t border-[#adadad] p-0 text-left font-normal">
                                <button className="flex items-center gap-[7px] pl-1">
                                    <span className="flex h-[13px] w-[13px] items-center justify-center rounded-xs border border-[#999]"><span className="h-px w-[7px] bg-[#666]" /></span>
                                    常数
                                </button>
                            </th>
                        </tr>
                        {[['节点', '16368'], ['单元', '14464']].map(([name, value]) => (
                            <tr key={name} className="h-[21px] text-[#8c8c8c]">
                                <td colSpan={2} className="p-0" />
                                <th className={clsx(cell, 'border-r')}><span className="pl-[3px]">{name}</span></th>
                                <td className={cell}><span className="pl-[3px]">{value}</span></td>
                            </tr>
                        ))}
                    </tbody>
                </table>
            </div>
            <div className="flex h-[19px] w-[174px] items-center border-l border-[#9a9a9f] bg-[#f0f0f0] text-[#444]">
                <ChevronLeft size={14} strokeWidth={2.5} className="mx-[2px] shrink-0" />
                <div className="h-full w-[121px] shrink-0 bg-[#c9c9c9]" />
                <ChevronRight size={14} strokeWidth={2.5} className="ml-auto shrink-0" />
            </div>
            <div className="flex h-[25px] items-start">
                <button className="h-[24px] w-[51px] border border-t-0 border-[#dcdcdc] bg-white">网格</button>
                <button className="h-[23px] w-[78px] border-b border-[#dcdcdc]">单元网格</button>
            </div>
        </aside>
    );
}

export default function App() {
    return (
        <div className="flex h-screen flex-col overflow-hidden bg-[#efefef] font-['Open_Sans','Noto_Sans_CJK_SC',sans-serif] text-[13px] leading-5 text-[#1b1b1b]">
            <svg width="0" height="0" className="absolute" aria-hidden="true">
                <defs>
                    <linearGradient id="steel" x1="0" x2="1"><stop offset="0" stopColor="#7b9bb9" /><stop offset="0.5" stopColor="#b4c7d8" /><stop offset="1" stopColor="#7b9bb9" /></linearGradient>
                </defs>
            </svg>
            <Ribbon />
            <div className="flex min-h-0 flex-1">
                <ProjectDock />
                <div className="ml-1 mr-[6px] flex min-w-0 flex-1 flex-col">
                    <Viewport />
                    <Messages />
                </div>
                <div className="flex w-[167px] shrink-0"><ParamDock /></div>
            </div>
            <footer className="h-5 shrink-0" />
        </div>
    );
}
